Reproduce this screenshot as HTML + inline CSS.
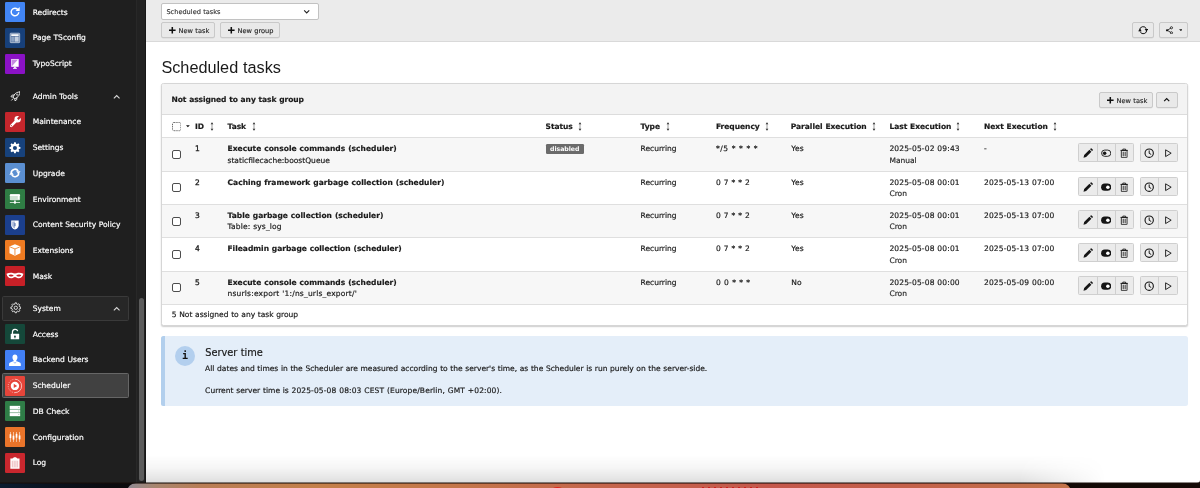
<!DOCTYPE html>
<html lang="en">
<head>
<meta charset="utf-8">
<title>Scheduled tasks</title>
<style>
*{box-sizing:border-box;margin:0;padding:0}
html,body{width:1200px;height:488px;overflow:hidden;background:#fff}
body{font-family:"DejaVu Sans","Liberation Sans",sans-serif;font-size:7.52px;word-spacing:.26px;color:#1a1a1a;position:relative;line-height:1.5}
.abs{position:absolute}
#desk{position:absolute;left:0;top:480px;width:1200px;height:8px;background:linear-gradient(90deg,#0b1c30 0,#0a1320 4%,#0b0b0f 9%,#0d0806 14%,#140a06 100%);overflow:hidden}
#desk .wall{position:absolute;left:126.5px;top:3px;width:944px;height:14px;border-radius:9px 9px 0 0;background:linear-gradient(90deg,#8f8a94 0,#a8866f 3%,#b97d55 8%,#c4804a 20%,#c4764a 35%,#c5664c 50%,#c5584c 68%,#c4604a 82%,#c3744a 100%)}
#desk .blob{position:absolute;left:551.5px;top:6.9px;width:11px;height:5px;border-radius:50%;background:#e0231c}
#desk .dots{position:absolute;left:701px;top:6.8px;width:60px;height:3px;background:radial-gradient(circle at 2px 2px,#d01818 1.5px,transparent 2.1px) 0 0/6px 4px repeat-x}
#edge{position:absolute;left:0;top:482px;width:1200px;height:2px;background:linear-gradient(180deg,rgba(24,14,10,.5) 0,rgba(24,14,10,.5) 50%,rgba(24,14,10,.55) 50%,rgba(24,14,10,.55) 100%);z-index:5}
#shade{position:absolute;left:0;top:455px;width:960px;height:27.5px;background:linear-gradient(180deg,rgba(0,0,0,0) 0,rgba(0,0,0,.035) 45%,rgba(0,0,0,.13) 100%);-webkit-mask-image:linear-gradient(90deg,#000 0,#000 91%,transparent 100%);mask-image:linear-gradient(90deg,#000 0,#000 91%,transparent 100%)}
#side{will-change:transform;position:absolute;left:0;top:0;width:146px;height:483px;background:#1f1f1f;overflow:hidden}
#side .track{position:absolute;left:136px;top:0;width:10px;height:100%;background:#222;border-left:1px solid #282828;border-right:1px solid #171717}
#side .thumb{position:absolute;left:139.3px;top:298px;width:4.6px;height:182.8px;border-radius:3px;background:#5c5c5c}
.mi{position:absolute;left:0;width:136px;height:25.7px;color:#fff;white-space:nowrap}
.mi .ic{position:absolute;left:5.1px;top:2.9px;width:19.9px;height:19.9px;border-radius:1.3px;overflow:hidden}
.mi .ic svg{position:absolute;left:0;top:0;width:100%;height:100%}
.mi .tx{-webkit-text-stroke:.18px #fff;position:absolute;left:32.7px;top:0;line-height:25.7px;font-size:7.52px}
.mi.hd .box,.mi.act .box{position:absolute;left:2.4px;top:0.8px;width:126.4px;height:24.8px;border-radius:1.5px;border:0.7px solid #333}
.mi.hd .box{background:#272727;border-color:#3a3a3a}
.mi.act .box{background:#414141;border-color:#666;top:.4px;height:24.6px}
.mi .chev{position:absolute;left:112.7px;top:10.9px;width:7.4px;height:5.3px}
#main{will-change:transform;position:absolute;left:146px;top:0;width:1054px;height:483px;border-radius:0 0 3px 0;background:#fff;overflow:hidden}
#doc{position:absolute;left:0;top:0;width:1054px;height:42px;background:#ebebeb;border-bottom:1px solid #d9d9d9}
.btn{position:absolute;height:16px;border:1px solid #c9c9c9;border-radius:2px;background:#e9e9e9;font-size:6.6px;line-height:15.2px;white-space:nowrap;color:#1a1a1a;-webkit-text-stroke:.12px #1a1a1a;box-shadow:0 .5px .5px rgba(0,0,0,.08)}
h1{position:absolute;left:15.4px;top:54px;font-family:"Liberation Sans",sans-serif;font-weight:400;font-size:16.25px;line-height:26px;white-space:nowrap;color:#1a1a1a}
#panel{position:absolute;left:15px;top:83px;width:1027px;height:243px;border:1px solid #d6d6d6;border-radius:2.5px;background:#fff;overflow:hidden;box-shadow:0 1px 1.5px rgba(0,0,0,.2)}
#panel .ph{position:absolute;left:0;top:0;width:100%;height:31px;background:#f3f3f3;border-bottom:1px solid #dcdcdc}
.row{position:absolute;left:0;width:100%;border-top:1px solid #dfdfdf}
.row.odd{background:#f7f7f7}
.c{position:absolute;white-space:nowrap;font-size:7.52px;line-height:11.5px;-webkit-text-stroke:.18px #1a1a1a}
.rg{height:19px;border:1px solid #cfcfcf;border-radius:1.5px;background:#ebebeb}
.rb{height:18px}
.dv{width:1px;height:17px;background:#cfcfcf}
.b{font-weight:700}
.cb{position:absolute;width:9.3px;height:9.2px;border:1px solid #4d4d4d;border-radius:2px;background:#fff}
#info{position:absolute;left:15px;top:336px;width:1026.5px;height:69.5px;background:#e4eef9;border-radius:2.5px;overflow:hidden}
#info:before{content:"";position:absolute;left:0;top:0;width:3.8px;height:100%;background:#b2cfed}
</style>
</head>
<body>
<div id="desk"><div class="wall"></div><div class="blob"></div><div class="dots"></div></div>
<div id="edge"></div>
<div id="side">
<div class="track"></div><div class="thumb"></div>
<div class="mi " style="top:-0.70px"><span class="ic" style="background:#4285f4"><svg viewBox="0 0 32 32" ><path d="M21.100 12.700A6.100 6.100 0 1 0 22.100 16.400" fill="none" stroke="#fff" stroke-width="2.300"/><path d="M23.600 8v6.600H17z" fill="#fff"/></svg></span><span class="tx" style="top:1px">Redirects</span></div>
<div class="mi " style="top:25.05px"><span class="ic" style="background:#17407a"><svg viewBox="0 0 32 32" ><rect x="8.400" y="8.400" width="15.200" height="15.200" rx="1" fill="#4f6c9a" stroke="#e3e9f2" stroke-width="1.100"/><rect x="10" y="10" width="12" height="2.800" fill="#fff"/><rect x="10" y="13.800" width="4.400" height="8.200" fill="#8fa6c6"/><rect x="15.400" y="13.800" width="6.600" height="8.200" fill="#c3cfe1"/></svg></span><span class="tx" style="top:0px">Page TSconfig</span></div>
<div class="mi " style="top:50.80px"><span class="ic" style="background:#8b12c6"><svg viewBox="0 0 32 32" ><rect x="10" y="8" width="12" height="12.6" fill="#fff"/><path d="M11 9h10L11 19.6z" fill="#c58ae2"/><rect x="14.6" y="20.6" width="2.8" height="1.8" fill="#fff"/><rect x="13" y="22.2" width="6" height="1.6" fill="#fff"/></svg></span><span class="tx" style="top:0px">TypoScript</span></div>
<div class="mi hd0" style="top:83.30px"><svg viewBox="0 0 16 16" style="position:absolute;left:9.500px;top:7.500px;width:10.800px;height:10.800px"><path d="M14.600 1.400C11 1.400 8 2.900 6 6L4.500 9 7 11.500l3-1.500c3.100-2 4.600-5 4.600-8.600zM6 6H3.200L1.400 8.600l3.100.4M10 10v2.800l-2.600 1.800-.4-3.100M4.600 11.400l-2.200 2.200" fill="none" stroke="#f4f4f4" stroke-width="1.300" stroke-linejoin="round" stroke-linecap="round"/><circle cx="10.600" cy="5.400" r="1" fill="none" stroke="#f4f4f4" stroke-width="1"/></svg><svg class="chev" viewBox="0 0 14 10"><path d="M1.600 8.400L7 3l5.400 5.400" fill="none" stroke="#d8d8d8" stroke-width="2.100"/></svg><span class="tx" style="top:1px">Admin Tools</span></div>
<div class="mi " style="top:109.00px"><span class="ic" style="background:#c4262c"><svg viewBox="0 0 32 32" ><path d="M10 22.200L18.400 13.800" stroke="#fff" stroke-width="4.200" stroke-linecap="round" fill="none"/><circle cx="20.300" cy="11.700" r="5.100" fill="#fff"/><path d="M20.600 11.400L27 5" stroke="#c4262c" stroke-width="3.600" fill="none"/><circle cx="10.200" cy="22" r=".9" fill="#c4262c"/></svg></span><span class="tx" style="top:0px">Maintenance</span></div>
<div class="mi " style="top:134.70px"><span class="ic" style="background:#17427c"><svg viewBox="0 0 32 32" ><path d="M14.7 7h2.6l.5 2.3 1.5.6 2-1.3 1.9 1.9-1.3 2 .6 1.5 2.3.5v2.6l-2.3.5-.6 1.5 1.3 2-1.9 1.9-2-1.3-1.5.6-.5 2.3h-2.6l-.5-2.3-1.5-.6-2 1.3-1.9-1.900 1.300-2-.6-1.500-2.300-.5v-2.600l2.300-.5.6-1.500-1.300-2 1.900-1.900 2 1.300 1.500-.6z" fill="#fff"/><circle cx="16" cy="16" r="3.3" fill="#17427c"/></svg></span><span class="tx" style="top:0px">Settings</span></div>
<div class="mi " style="top:160.40px"><span class="ic" style="background:#5b8fd1"><svg viewBox="0 0 32 32" ><path d="M10.100 16.600A5.900 5.900 0 0 1 21.200 13.200" fill="none" stroke="#fff" stroke-width="2.500"/><path d="M17.800 13.200h7.200l-3.400 4.600z" fill="#fff"/><path d="M21.900 15.400A5.900 5.900 0 0 1 10.800 18.800" fill="none" stroke="#fff" stroke-width="2.500"/><path d="M14.200 18.800H7l3.400-4.600z" fill="#fff"/></svg></span><span class="tx" style="top:1px">Upgrade</span></div>
<div class="mi " style="top:186.10px"><span class="ic" style="background:#2f7d44"><svg viewBox="0 0 32 32" ><rect x="7.800" y="8.600" width="16.400" height="9.400" rx="1.600" fill="#cfe3d4"/><path d="M7.800 11.400v-1.200a1.600 1.600 0 0 1 1.600-1.600h13.200a1.600 1.600 0 0 1 1.600 1.600v1.200z" fill="#fff"/><rect x="20.600" y="10" width="2.200" height="6.800" fill="#fff"/><rect x="15.300" y="18" width="1.400" height="3" fill="#fff"/><rect x="7.800" y="21.100" width="16.400" height="1.200" fill="#fff"/><circle cx="16" cy="21.700" r="2" fill="#fff"/></svg></span><span class="tx" style="top:0.5px">Environment</span></div>
<div class="mi " style="top:211.80px"><span class="ic" style="background:#1b3f8d"><svg viewBox="0 0 32 32" ><path d="M10 9h12v7.500c0 3.600-2.600 5.800-6 7-3.400-1.200-6-3.400-6-7z" fill="#fff"/><path d="M11.600 10.600H16v11c-2.600-1-4.400-2.700-4.400-5.300z" fill="#a9b8d8"/><rect x="15.300" y="13" width="1.600" height="5" fill="#1b3f8d" opacity=".75"/></svg></span><span class="tx" style="top:0px">Content Security Policy</span></div>
<div class="mi " style="top:237.50px"><span class="ic" style="background:#ee7b22"><svg viewBox="0 0 32 32" ><path d="M16 7l8.800 3.600v10.600L16 25.200l-8.800-4v-10.600z" fill="#fff"/><path d="M8.200 11.200L16 14.400l7.800-3.200M16 14.400v9.800" fill="none" stroke="#ee7b22" stroke-width="1.300"/></svg></span><span class="tx" style="top:0px">Extensions</span></div>
<div class="mi " style="top:263.20px"><span class="ic" style="background:#c72027"><svg viewBox="0 0 32 32" ><path d="M2.400 12.600c2.600-1.500 6.200-2.100 8.800-1.700 1.900.3 3.100 1 4.800 1s2.900-.7 4.800-1c2.600-.4 6.200.2 8.800 1.700-.5 4.400-4 7.500-8.400 7.200-2.500-.2-3.600-2-5.200-2s-2.700 1.800-5.200 2c-4.400.3-7.900-2.800-8.400-7.200z" fill="#fff"/><path d="M5.800 14.800c2.100-1.500 5.600-1.500 8.200.5-1.900 2.200-6.300 2.600-8.200-.5zM26.200 14.800c-2.100-1.500-5.600-1.500-8.200.5 1.900 2.200 6.300 2.600 8.200-.5z" fill="#c72027"/></svg></span><span class="tx" style="top:1px">Mask</span></div>
<div class="mi hd" style="top:295.30px"><div class="box"></div><svg viewBox="0 0 16 16" style="position:absolute;left:9.500px;top:7.200px;width:11.600px;height:11.600px"><path d="M13.15 6.76L14.82 6.98L14.82 9.02L13.15 9.24L12.52 10.77L13.55 12.10L12.10 13.55L10.77 12.52L9.24 13.15L9.02 14.82L6.98 14.82L6.76 13.15L5.23 12.52L3.90 13.55L2.45 12.10L3.48 10.77L2.85 9.24L1.18 9.02L1.18 6.98L2.85 6.76L3.48 5.23L2.45 3.90L3.90 2.45L5.23 3.48L6.76 2.85L6.98 1.18L9.02 1.18L9.24 2.85L10.77 3.48L12.10 2.45L13.55 3.90L12.52 5.23z" fill="none" stroke="#ededed" stroke-width="1.200" stroke-linejoin="round"/><circle cx="8" cy="8" r="2.300" fill="none" stroke="#ededed" stroke-width="1.200"/></svg><svg class="chev" viewBox="0 0 14 10"><path d="M1.600 8.400L7 3l5.400 5.400" fill="none" stroke="#d8d8d8" stroke-width="2.100"/></svg><span class="tx" style="top:1px">System</span></div>
<div class="mi " style="top:321.20px"><span class="ic" style="background:#15483a"><svg viewBox="0 0 32 32" ><path d="M12 16v-3.200a4.300 4.300 0 0 1 8.400-1.300" fill="none" stroke="#fff" stroke-width="2"/><rect x="9.200" y="15.600" width="13.600" height="9" rx=".6" fill="#fff"/><path d="M16 18.400a1.500 1.500 0 0 1 .8 2.800v1.600h-1.600v-1.600a1.500 1.500 0 0 1 .8-2.800z" fill="#15483a"/></svg></span><span class="tx" style="top:1px">Access</span></div>
<div class="mi " style="top:346.90px"><span class="ic" style="background:#4280f5"><svg viewBox="0 0 32 32" ><path d="M16 7.200c2.500 0 4 1.900 4 4.500 0 2-.7 3.700-1.800 4.700v1.400l5.600 2.400c1 .4 1.600 1.300 1.600 2.300v3.100H6.600v-3.100c0-1 .6-1.900 1.600-2.300l5.600-2.400v-1.400c-1.100-1-1.800-2.700-1.800-4.700 0-2.600 1.500-4.500 4-4.500z" fill="#fff"/><path d="M13.600 18.800l2.400 2.600 2.400-2.600" fill="none" stroke="#4280f5" stroke-width=".9"/></svg></span><span class="tx" style="top:0.5px">Backend Users</span></div>
<div class="mi act" style="top:372.90px"><div class="box"></div><span class="ic" style="background:#e6453a"><svg viewBox="0 0 32 32" ><circle cx="16" cy="16" r="6.700" fill="#fff"/><path d="M14.100 12.600l5.500 3.400-5.500 3.400z" fill="#e6453a"/><path d="M16 5.200a10.800 10.800 0 0 1 0 21.600" fill="none" stroke="#fff" stroke-width="1.100" opacity=".9"/><path d="M16 26.800a10.800 10.800 0 0 1 0-21.600" fill="none" stroke="#fff" stroke-width="1.100" stroke-dasharray="1.500 2.200" opacity=".9"/></svg></span><span class="tx" style="top:0px">Scheduler</span></div>
<div class="mi " style="top:398.30px"><span class="ic" style="background:#2f7d47"><svg viewBox="0 0 32 32" ><rect x="7.600" y="7.800" width="16.800" height="5" fill="#fff"/><rect x="7.600" y="13.600" width="16.800" height="5" fill="#fff"/><rect x="7.600" y="19.400" width="16.800" height="5" fill="#fff"/><g fill="#2f7d47"><circle cx="22.300" cy="10.300" r=".7"/><circle cx="22.300" cy="16.100" r=".7"/><circle cx="22.300" cy="21.900" r=".7"/></g></svg></span><span class="tx" style="top:1px">DB Check</span></div>
<div class="mi " style="top:424.00px"><span class="ic" style="background:#e9742a"><svg viewBox="0 0 32 32" ><g fill="#fff"><rect x="8.300" y="8" width=".9" height="16"/><rect x="13.200" y="8" width=".9" height="16"/><rect x="18.100" y="8" width=".9" height="16"/><rect x="23" y="8" width=".9" height="16"/><rect x="7.400" y="11.600" width="2.700" height="6.200"/><rect x="12.300" y="14" width="2.700" height="6.200"/><rect x="17.200" y="11" width="2.700" height="6.200"/><rect x="22.100" y="13.600" width="2.700" height="6.200"/></g></svg></span><span class="tx" style="top:1px">Configuration</span></div>
<div class="mi " style="top:449.90px"><span class="ic" style="background:#c9272e"><svg viewBox="0 0 32 32" ><path d="M8.600 9h3.600c.3-1.300 1.900-2.200 3.800-2.200s3.500.9 3.800 2.200h3.600v16.400H8.600z" fill="#fff"/><rect x="10.800" y="12.400" width="10.400" height="10.800" fill="#f0c6c8"/><rect x="13.700" y="12.400" width="1" height="10.800" fill="#fff"/><rect x="17.300" y="12.400" width="1" height="10.800" fill="#fff"/></svg></span><span class="tx" style="top:0.5px">Log</span></div>
</div>
<div id="main">
<div id="doc">
<div class="abs" style="left:15px;top:3px;width:158px;height:17px;border:1px solid #c2c2c2;border-radius:2px;background:#fff"><span class="abs" style="left:4.400px;top:.6px;line-height:14px;font-size:6.600px;color:#2a2a2a;-webkit-text-stroke:.1px #2a2a2a">Scheduled tasks</span><span class="abs" style="left:140.60px;top:3.80px;width:7.4px;height:7.4px"><svg style="display:block;width:100%;height:100%" viewBox="0 0 16 16"><path d="M2.500 5l5.500 5.500L13.500 5" fill="none" stroke="#222" stroke-width="2.400"/></svg></span></div>
<div class="btn" style="left:15px;top:22px;width:54px"><span class="abs" style="left:7.00px;top:4.20px;width:6.6px;height:6.6px"><svg style="display:block;width:100%;height:100%" viewBox="0 0 10 10"><path d="M5 0v10M0 5h10" stroke="#111" stroke-width="2.300" fill="none"/></svg></span><span class="abs" style="left:16.600px;top:.5px">New task</span></div>
<div class="btn" style="left:74px;top:22px;width:60px"><span class="abs" style="left:7.00px;top:4.20px;width:6.6px;height:6.6px"><svg style="display:block;width:100%;height:100%" viewBox="0 0 10 10"><path d="M5 0v10M0 5h10" stroke="#111" stroke-width="2.300" fill="none"/></svg></span><span class="abs" style="left:16.600px;top:.5px">New group</span></div>
<div class="btn" style="left:986px;top:22px;width:22px"><span class="abs" style="left:4.90px;top:1.90px;width:10.4px;height:10.4px"><svg style="display:block;width:100%;height:100%" viewBox="0 0 16 16"><path d="M2.900 8.800A5.100 5.100 0 0 1 12.700 6" fill="none" stroke="#111" stroke-width="1.500"/><path d="M10.200 6.200h5.600L13 10.200z" fill="#111"/><path d="M13.100 7.200A5.100 5.100 0 0 1 3.300 10" fill="none" stroke="#111" stroke-width="1.500"/><path d="M5.800 9.800H.2L3 5.800z" fill="#111"/></svg></span></div>
<div class="btn" style="left:1013px;top:22px;width:29px"><span class="abs" style="left:5.00px;top:2.70px;width:8.6px;height:8.6px"><svg style="display:block;width:100%;height:100%" viewBox="0 0 16 16"><path d="M11.200 3.600L4.400 8l6.800 4.400" fill="none" stroke="#111" stroke-width="1.500"/><circle cx="12" cy="3.300" r="2" fill="#e9e9e9" stroke="#111" stroke-width="1.500"/><circle cx="3.800" cy="8" r="2.100" fill="#111"/><circle cx="12" cy="12.700" r="2" fill="#e9e9e9" stroke="#111" stroke-width="1.500"/></svg></span><span class="abs" style="left:18.70px;top:6.00px;width:3.8px;height:2.200px"><svg style="display:block;width:100%;height:100%" viewBox="0 0 8 4"><path d="M0 0h8L4 4z" fill="#111"/></svg></span></div>
</div>
<h1>Scheduled tasks</h1>
<div id="panel">
<div class="ph"></div>
<span class="c b" style="left:9.50px;top:10.00px;letter-spacing:-.070px">Not assigned to any task group</span>
<div class="btn" style="left:937.0px;top:8.0px;width:54px;height:16px"><span class="abs" style="left:7.00px;top:4.20px;width:6.6px;height:6.6px"><svg style="display:block;width:100%;height:100%" viewBox="0 0 10 10"><path d="M5 0v10M0 5h10" stroke="#111" stroke-width="2.300" fill="none"/></svg></span><span class="abs" style="left:16.600px;top:.5px">New task</span></div>
<div class="btn" style="left:994.0px;top:8.0px;width:21.500px;height:16px"><span class="abs" style="left:6.20px;top:3.20px;width:7.4px;height:7.4px"><svg style="display:block;width:100%;height:100%" viewBox="0 0 16 16"><path d="M2.500 11L8 5.500l5.500 5.500" fill="none" stroke="#111" stroke-width="2.600"/></svg></span></div>
<span class="abs" style="left:10.10px;top:38.40px;width:9.4px;height:9.2px"><svg style="display:block;width:100%;height:100%" viewBox="0 0 9.400 9.200"><rect x=".5" y=".5" width="8.400" height="8.200" rx="1.300" fill="#fff" stroke="#555" stroke-width=".9" stroke-dasharray="1.100 .7"/></svg></span>
<span class="abs" style="left:24.20px;top:41.40px;width:3.8px;height:2.4px"><svg style="display:block;width:100%;height:100%" viewBox="0 0 8 4"><path d="M0 0h8L4 4z" fill="#111"/></svg></span>
<span class="c b" style="left:33.00px;top:37.00px;letter-spacing:-.030px">ID</span><span class="abs" style="left:48.40px;top:38.40px;width:4px;height:9px"><svg style="display:block;width:100%;height:100%" viewBox="0 0 4 9"><path d="M2 .8v7.400" stroke="#4a4a4a" stroke-width=".55" fill="none"/><path d="M.6 2.200L2 .2l1.400 2zM.6 6.800L2 8.800l1.400-2z" fill="#3a3a3a"/></svg></span>
<span class="c b" style="left:65.50px;top:37.00px;letter-spacing:-.030px">Task</span><span class="abs" style="left:89.90px;top:38.40px;width:4px;height:9px"><svg style="display:block;width:100%;height:100%" viewBox="0 0 4 9"><path d="M2 .8v7.400" stroke="#4a4a4a" stroke-width=".55" fill="none"/><path d="M.6 2.200L2 .2l1.400 2zM.6 6.800L2 8.800l1.400-2z" fill="#3a3a3a"/></svg></span>
<span class="c b" style="left:383.50px;top:37.00px;letter-spacing:-.030px">Status</span><span class="abs" style="left:416.00px;top:38.40px;width:4px;height:9px"><svg style="display:block;width:100%;height:100%" viewBox="0 0 4 9"><path d="M2 .8v7.400" stroke="#4a4a4a" stroke-width=".55" fill="none"/><path d="M.6 2.200L2 .2l1.400 2zM.6 6.800L2 8.800l1.400-2z" fill="#3a3a3a"/></svg></span>
<span class="c b" style="left:478.50px;top:37.00px;letter-spacing:-.030px">Type</span><span class="abs" style="left:503.50px;top:38.40px;width:4px;height:9px"><svg style="display:block;width:100%;height:100%" viewBox="0 0 4 9"><path d="M2 .8v7.400" stroke="#4a4a4a" stroke-width=".55" fill="none"/><path d="M.6 2.200L2 .2l1.400 2zM.6 6.800L2 8.800l1.400-2z" fill="#3a3a3a"/></svg></span>
<span class="c b" style="left:554.00px;top:37.00px;letter-spacing:-.030px">Frequency</span><span class="abs" style="left:602.50px;top:38.40px;width:4px;height:9px"><svg style="display:block;width:100%;height:100%" viewBox="0 0 4 9"><path d="M2 .8v7.400" stroke="#4a4a4a" stroke-width=".55" fill="none"/><path d="M.6 2.200L2 .2l1.400 2zM.6 6.800L2 8.800l1.400-2z" fill="#3a3a3a"/></svg></span>
<span class="c b" style="left:628.80px;top:37.00px;letter-spacing:-.030px">Parallel Execution</span><span class="abs" style="left:710.20px;top:38.40px;width:4px;height:9px"><svg style="display:block;width:100%;height:100%" viewBox="0 0 4 9"><path d="M2 .8v7.400" stroke="#4a4a4a" stroke-width=".55" fill="none"/><path d="M.6 2.200L2 .2l1.400 2zM.6 6.800L2 8.800l1.400-2z" fill="#3a3a3a"/></svg></span>
<span class="c b" style="left:727.40px;top:37.00px;letter-spacing:-.030px">Last Execution</span><span class="abs" style="left:794.00px;top:38.40px;width:4px;height:9px"><svg style="display:block;width:100%;height:100%" viewBox="0 0 4 9"><path d="M2 .8v7.400" stroke="#4a4a4a" stroke-width=".55" fill="none"/><path d="M.6 2.200L2 .2l1.400 2zM.6 6.800L2 8.800l1.400-2z" fill="#3a3a3a"/></svg></span>
<span class="c b" style="left:822.00px;top:37.00px;letter-spacing:-.030px">Next Execution</span><span class="abs" style="left:890.50px;top:38.40px;width:4px;height:9px"><svg style="display:block;width:100%;height:100%" viewBox="0 0 4 9"><path d="M2 .8v7.400" stroke="#4a4a4a" stroke-width=".55" fill="none"/><path d="M.6 2.200L2 .2l1.400 2zM.6 6.800L2 8.800l1.400-2z" fill="#3a3a3a"/></svg></span>
<div class="row odd" style="top:53.0px;height:34px"></div>
<span class="cb" style="left:10.20px;top:66.0px"></span>
<span class="c " style="left:33.00px;top:59.00px;-webkit-text-stroke:.3px #1a1a1a">1</span>
<span class="c b" style="left:65.50px;top:59.00px;letter-spacing:0.025px">Execute console commands (scheduler)</span>
<span class="c " style="left:65.50px;top:71.00px;letter-spacing:0.0px">staticfilecache:boostQueue</span>
<span class="abs" style="left:383.50px;top:60.40px;width:38.500px;height:9.800px;border-radius:1.200px;background:#6b6b6b;color:#fff;font-weight:700;font-size:6.200px;line-height:9.800px;text-align:center;letter-spacing:-.030px">disabled</span>
<span class="c " style="left:478.50px;top:59.00px;">Recurring</span>
<span class="c " style="left:554.00px;top:59.00px;letter-spacing:0.49px">*/5 * * * *</span>
<span class="c " style="left:629.30px;top:59.00px;letter-spacing:.12px">Yes</span>
<span class="c " style="left:727.40px;top:59.00px;letter-spacing:.150px">2025-05-02 09:43</span>
<span class="c " style="left:727.40px;top:71.00px;color:#333">Manual</span>
<span class="c " style="left:822.00px;top:59.00px;letter-spacing:.150px">-</span>
<span class="abs rg" style="left:916.0px;top:59.0px;width:56px"></span>
<span class="abs rg" style="left:978.0px;top:59.0px;width:37.500px"></span>
<span class="abs dv" style="left:935.0px;top:60.0px"></span><span class="abs dv" style="left:953.0px;top:60.0px"></span><span class="abs dv" style="left:996.0px;top:60.0px"></span>
<span class="abs" style="left:920.80px;top:64.10px;width:10.2px;height:10.2px"><svg style="display:block;width:100%;height:100%" viewBox="0 0 16 16"><path d="M.8 15.200l1-4.100 8.300-8.300 3.100 3.100-8.300 8.300zM11.100 1.800l1-1a1 1 0 0 1 1.400 0l1.700 1.700a1 1 0 0 1 0 1.400l-1 1z" fill="#151515"/></svg></span>
<span class="abs" style="left:938.80px;top:64.00px;width:10.4px;height:10.4px"><svg style="display:block;width:100%;height:100%" viewBox="0 0 16 16"><rect x=".9" y="3.200" width="14.200" height="9.600" rx="4.800" fill="none" stroke="#151515" stroke-width="1.400"/><circle cx="5.600" cy="8" r="2.700" fill="#151515"/></svg></span>
<span class="abs" style="left:957.20px;top:63.90px;width:10.4px;height:10.4px"><svg style="display:block;width:100%;height:100%" viewBox="0 0 16 16"><path d="M3.600 3.700h8.800v10.400a.8.800 0 0 1-.8.800H4.400a.8.800 0 0 1-.8-.8zM2.300 3.700h11.400M5.900 3.500V1.700h4.200v1.800M6.500 5.800v7M9.500 5.800v7" fill="none" stroke="#151515" stroke-width="1.300"/></svg></span>
<span class="abs" style="left:982.30px;top:64.10px;width:10.4px;height:10.4px"><svg style="display:block;width:100%;height:100%" viewBox="0 0 16 16"><circle cx="8" cy="8" r="6.400" fill="none" stroke="#151515" stroke-width="1.700"/><path d="M8 3.800v4.400l3.100 1.800" fill="none" stroke="#151515" stroke-width="1.500"/></svg></span>
<span class="abs" style="left:1000.70px;top:64.20px;width:10.4px;height:10.4px"><svg style="display:block;width:100%;height:100%" viewBox="0 0 16 16"><path d="M4 2.800l8.600 5.200L4 13.200z" fill="none" stroke="#151515" stroke-width="1.400" stroke-linejoin="round"/></svg></span>
<div class="row " style="top:87.0px;height:33px"></div>
<span class="cb" style="left:10.20px;top:99.0px"></span>
<span class="c " style="left:33.00px;top:93.00px;-webkit-text-stroke:.3px #1a1a1a">2</span>
<span class="c b" style="left:65.50px;top:93.00px;letter-spacing:0.03px">Caching framework garbage collection (scheduler)</span>
<span class="c " style="left:478.50px;top:93.00px;">Recurring</span>
<span class="c " style="left:554.00px;top:93.00px;letter-spacing:0.18px">0 7 * * 2</span>
<span class="c " style="left:629.30px;top:93.00px;letter-spacing:.12px">Yes</span>
<span class="c " style="left:727.40px;top:93.00px;letter-spacing:.150px">2025-05-08 00:01</span>
<span class="c " style="left:727.40px;top:104.00px;color:#333">Cron</span>
<span class="c " style="left:822.00px;top:93.00px;letter-spacing:.150px">2025-05-13 07:00</span>
<span class="abs rg" style="left:916.0px;top:93.0px;width:56px"></span>
<span class="abs rg" style="left:978.0px;top:93.0px;width:37.500px"></span>
<span class="abs dv" style="left:935.0px;top:94.0px"></span><span class="abs dv" style="left:953.0px;top:94.0px"></span><span class="abs dv" style="left:996.0px;top:94.0px"></span>
<span class="abs" style="left:920.80px;top:98.10px;width:10.2px;height:10.2px"><svg style="display:block;width:100%;height:100%" viewBox="0 0 16 16"><path d="M.8 15.200l1-4.100 8.300-8.300 3.100 3.100-8.300 8.300zM11.100 1.800l1-1a1 1 0 0 1 1.400 0l1.700 1.700a1 1 0 0 1 0 1.400l-1 1z" fill="#151515"/></svg></span>
<span class="abs" style="left:938.80px;top:98.00px;width:10.4px;height:10.4px"><svg style="display:block;width:100%;height:100%" viewBox="0 0 16 16"><rect x=".2" y="2.500" width="15.600" height="11" rx="5.500" fill="#151515"/><circle cx="10.600" cy="8" r="2.700" fill="#fff"/></svg></span>
<span class="abs" style="left:957.20px;top:97.90px;width:10.4px;height:10.4px"><svg style="display:block;width:100%;height:100%" viewBox="0 0 16 16"><path d="M3.600 3.700h8.800v10.400a.8.800 0 0 1-.8.800H4.400a.8.800 0 0 1-.8-.8zM2.300 3.700h11.400M5.900 3.500V1.700h4.200v1.800M6.500 5.800v7M9.500 5.800v7" fill="none" stroke="#151515" stroke-width="1.300"/></svg></span>
<span class="abs" style="left:982.30px;top:98.10px;width:10.4px;height:10.4px"><svg style="display:block;width:100%;height:100%" viewBox="0 0 16 16"><circle cx="8" cy="8" r="6.400" fill="none" stroke="#151515" stroke-width="1.700"/><path d="M8 3.800v4.400l3.100 1.800" fill="none" stroke="#151515" stroke-width="1.500"/></svg></span>
<span class="abs" style="left:1000.70px;top:98.20px;width:10.4px;height:10.4px"><svg style="display:block;width:100%;height:100%" viewBox="0 0 16 16"><path d="M4 2.800l8.600 5.200L4 13.200z" fill="none" stroke="#151515" stroke-width="1.400" stroke-linejoin="round"/></svg></span>
<div class="row odd" style="top:120.0px;height:33px"></div>
<span class="cb" style="left:10.20px;top:133.0px"></span>
<span class="c " style="left:33.00px;top:126.00px;-webkit-text-stroke:.3px #1a1a1a">3</span>
<span class="c b" style="left:65.50px;top:126.00px;letter-spacing:0.015px">Table garbage collection (scheduler)</span>
<span class="c " style="left:65.50px;top:137.00px;letter-spacing:0.15px">Table: sys_log</span>
<span class="c " style="left:478.50px;top:126.00px;">Recurring</span>
<span class="c " style="left:554.00px;top:126.00px;letter-spacing:0.18px">0 7 * * 2</span>
<span class="c " style="left:629.30px;top:126.00px;letter-spacing:.12px">Yes</span>
<span class="c " style="left:727.40px;top:126.00px;letter-spacing:.150px">2025-05-08 00:01</span>
<span class="c " style="left:727.40px;top:137.00px;color:#333">Cron</span>
<span class="c " style="left:822.00px;top:126.00px;letter-spacing:.150px">2025-05-13 07:00</span>
<span class="abs rg" style="left:916.0px;top:126.0px;width:56px"></span>
<span class="abs rg" style="left:978.0px;top:126.0px;width:37.500px"></span>
<span class="abs dv" style="left:935.0px;top:127.0px"></span><span class="abs dv" style="left:953.0px;top:127.0px"></span><span class="abs dv" style="left:996.0px;top:127.0px"></span>
<span class="abs" style="left:920.80px;top:131.10px;width:10.2px;height:10.2px"><svg style="display:block;width:100%;height:100%" viewBox="0 0 16 16"><path d="M.8 15.200l1-4.100 8.300-8.300 3.100 3.100-8.300 8.300zM11.100 1.800l1-1a1 1 0 0 1 1.400 0l1.700 1.700a1 1 0 0 1 0 1.400l-1 1z" fill="#151515"/></svg></span>
<span class="abs" style="left:938.80px;top:131.00px;width:10.4px;height:10.4px"><svg style="display:block;width:100%;height:100%" viewBox="0 0 16 16"><rect x=".2" y="2.500" width="15.600" height="11" rx="5.500" fill="#151515"/><circle cx="10.600" cy="8" r="2.700" fill="#fff"/></svg></span>
<span class="abs" style="left:957.20px;top:130.90px;width:10.4px;height:10.4px"><svg style="display:block;width:100%;height:100%" viewBox="0 0 16 16"><path d="M3.600 3.700h8.800v10.400a.8.800 0 0 1-.8.800H4.400a.8.800 0 0 1-.8-.8zM2.300 3.700h11.400M5.900 3.500V1.700h4.200v1.800M6.500 5.800v7M9.500 5.800v7" fill="none" stroke="#151515" stroke-width="1.300"/></svg></span>
<span class="abs" style="left:982.30px;top:131.10px;width:10.4px;height:10.4px"><svg style="display:block;width:100%;height:100%" viewBox="0 0 16 16"><circle cx="8" cy="8" r="6.400" fill="none" stroke="#151515" stroke-width="1.700"/><path d="M8 3.800v4.400l3.100 1.800" fill="none" stroke="#151515" stroke-width="1.500"/></svg></span>
<span class="abs" style="left:1000.70px;top:131.20px;width:10.4px;height:10.4px"><svg style="display:block;width:100%;height:100%" viewBox="0 0 16 16"><path d="M4 2.800l8.600 5.200L4 13.200z" fill="none" stroke="#151515" stroke-width="1.400" stroke-linejoin="round"/></svg></span>
<div class="row " style="top:153.0px;height:34px"></div>
<span class="cb" style="left:10.20px;top:166.0px"></span>
<span class="c " style="left:33.00px;top:159.00px;-webkit-text-stroke:.3px #1a1a1a">4</span>
<span class="c b" style="left:65.50px;top:159.00px;letter-spacing:-0.012px">Fileadmin garbage collection (scheduler)</span>
<span class="c " style="left:478.50px;top:159.00px;">Recurring</span>
<span class="c " style="left:554.00px;top:159.00px;letter-spacing:0.18px">0 7 * * 2</span>
<span class="c " style="left:629.30px;top:159.00px;letter-spacing:.12px">Yes</span>
<span class="c " style="left:727.40px;top:159.00px;letter-spacing:.150px">2025-05-08 00:01</span>
<span class="c " style="left:727.40px;top:171.00px;color:#333">Cron</span>
<span class="c " style="left:822.00px;top:159.00px;letter-spacing:.150px">2025-05-13 07:00</span>
<span class="abs rg" style="left:916.0px;top:159.0px;width:56px"></span>
<span class="abs rg" style="left:978.0px;top:159.0px;width:37.500px"></span>
<span class="abs dv" style="left:935.0px;top:160.0px"></span><span class="abs dv" style="left:953.0px;top:160.0px"></span><span class="abs dv" style="left:996.0px;top:160.0px"></span>
<span class="abs" style="left:920.80px;top:164.10px;width:10.2px;height:10.2px"><svg style="display:block;width:100%;height:100%" viewBox="0 0 16 16"><path d="M.8 15.200l1-4.100 8.300-8.300 3.100 3.100-8.300 8.300zM11.100 1.800l1-1a1 1 0 0 1 1.400 0l1.700 1.700a1 1 0 0 1 0 1.400l-1 1z" fill="#151515"/></svg></span>
<span class="abs" style="left:938.80px;top:164.00px;width:10.4px;height:10.4px"><svg style="display:block;width:100%;height:100%" viewBox="0 0 16 16"><rect x=".2" y="2.500" width="15.600" height="11" rx="5.500" fill="#151515"/><circle cx="10.600" cy="8" r="2.700" fill="#fff"/></svg></span>
<span class="abs" style="left:957.20px;top:163.90px;width:10.4px;height:10.4px"><svg style="display:block;width:100%;height:100%" viewBox="0 0 16 16"><path d="M3.600 3.700h8.800v10.400a.8.800 0 0 1-.8.800H4.400a.8.800 0 0 1-.8-.8zM2.300 3.700h11.400M5.900 3.500V1.700h4.200v1.800M6.500 5.800v7M9.500 5.800v7" fill="none" stroke="#151515" stroke-width="1.300"/></svg></span>
<span class="abs" style="left:982.30px;top:164.10px;width:10.4px;height:10.4px"><svg style="display:block;width:100%;height:100%" viewBox="0 0 16 16"><circle cx="8" cy="8" r="6.400" fill="none" stroke="#151515" stroke-width="1.700"/><path d="M8 3.800v4.400l3.100 1.800" fill="none" stroke="#151515" stroke-width="1.500"/></svg></span>
<span class="abs" style="left:1000.70px;top:164.20px;width:10.4px;height:10.4px"><svg style="display:block;width:100%;height:100%" viewBox="0 0 16 16"><path d="M4 2.800l8.600 5.200L4 13.200z" fill="none" stroke="#151515" stroke-width="1.400" stroke-linejoin="round"/></svg></span>
<div class="row odd" style="top:187.0px;height:33px"></div>
<span class="cb" style="left:10.20px;top:199.0px"></span>
<span class="c " style="left:33.00px;top:193.00px;-webkit-text-stroke:.3px #1a1a1a">5</span>
<span class="c b" style="left:65.50px;top:193.00px;letter-spacing:0.025px">Execute console commands (scheduler)</span>
<span class="c " style="left:65.50px;top:204.00px;letter-spacing:0.19px">nsurls:export &#39;1:/ns_urls_export/&#39;</span>
<span class="c " style="left:478.50px;top:193.00px;">Recurring</span>
<span class="c " style="left:554.00px;top:193.00px;letter-spacing:0.33px">0 0 * * *</span>
<span class="c " style="left:629.30px;top:193.00px;letter-spacing:.12px">No</span>
<span class="c " style="left:727.40px;top:193.00px;letter-spacing:.150px">2025-05-08 00:00</span>
<span class="c " style="left:727.40px;top:204.00px;color:#333">Cron</span>
<span class="c " style="left:822.00px;top:193.00px;letter-spacing:.150px">2025-05-09 00:00</span>
<span class="abs rg" style="left:916.0px;top:192.0px;width:56px"></span>
<span class="abs rg" style="left:978.0px;top:192.0px;width:37.500px"></span>
<span class="abs dv" style="left:935.0px;top:193.0px"></span><span class="abs dv" style="left:953.0px;top:193.0px"></span><span class="abs dv" style="left:996.0px;top:193.0px"></span>
<span class="abs" style="left:920.80px;top:197.10px;width:10.2px;height:10.2px"><svg style="display:block;width:100%;height:100%" viewBox="0 0 16 16"><path d="M.8 15.200l1-4.100 8.300-8.300 3.100 3.100-8.300 8.300zM11.100 1.800l1-1a1 1 0 0 1 1.400 0l1.700 1.700a1 1 0 0 1 0 1.400l-1 1z" fill="#151515"/></svg></span>
<span class="abs" style="left:938.80px;top:197.00px;width:10.4px;height:10.4px"><svg style="display:block;width:100%;height:100%" viewBox="0 0 16 16"><rect x=".2" y="2.500" width="15.600" height="11" rx="5.500" fill="#151515"/><circle cx="10.600" cy="8" r="2.700" fill="#fff"/></svg></span>
<span class="abs" style="left:957.20px;top:196.90px;width:10.4px;height:10.4px"><svg style="display:block;width:100%;height:100%" viewBox="0 0 16 16"><path d="M3.600 3.700h8.800v10.400a.8.800 0 0 1-.8.800H4.400a.8.800 0 0 1-.8-.8zM2.300 3.700h11.400M5.900 3.500V1.700h4.200v1.800M6.500 5.800v7M9.500 5.800v7" fill="none" stroke="#151515" stroke-width="1.300"/></svg></span>
<span class="abs" style="left:982.30px;top:197.10px;width:10.4px;height:10.4px"><svg style="display:block;width:100%;height:100%" viewBox="0 0 16 16"><circle cx="8" cy="8" r="6.400" fill="none" stroke="#151515" stroke-width="1.700"/><path d="M8 3.800v4.400l3.100 1.800" fill="none" stroke="#151515" stroke-width="1.500"/></svg></span>
<span class="abs" style="left:1000.70px;top:197.20px;width:10.4px;height:10.4px"><svg style="display:block;width:100%;height:100%" viewBox="0 0 16 16"><path d="M4 2.800l8.600 5.200L4 13.200z" fill="none" stroke="#151515" stroke-width="1.400" stroke-linejoin="round"/></svg></span>
<div class="row" style="top:220.0px;height:22px"></div>
<span class="c " style="left:9.80px;top:225.00px;">5 Not assigned to any task group</span>
</div>
<div id="shade"></div>
<div id="info">
<span class="abs" style="left:13.800px;top:9.800px;width:20.300px;height:20.300px;border-radius:50%;background:#b3cfee"></span>
<span class="abs" style="left:13.800px;top:10px;width:20.300px;line-height:20.300px;text-align:center;font-family:'DejaVu Sans Mono','Liberation Mono',monospace;font-weight:700;font-size:10px;color:#111">i</span>
<span class="c" style="left:44.200px;top:10px;font-size:9.800px;line-height:14px;color:#1a1a1a">Server time</span>
<span class="c" style="left:44.100px;top:27px">All dates and times in the Scheduler are measured according to the server&#39;s time, as the Scheduler is run purely on the server-side.</span>
<span class="c" style="left:44.100px;top:49px"><span style="letter-spacing:.034px">Current server time is </span><span style="letter-spacing:.128px">2025-05-08 08:03 CEST (Europe/Berlin, GMT +02:00).</span></span>
</div>
</div>
</body>
</html>
